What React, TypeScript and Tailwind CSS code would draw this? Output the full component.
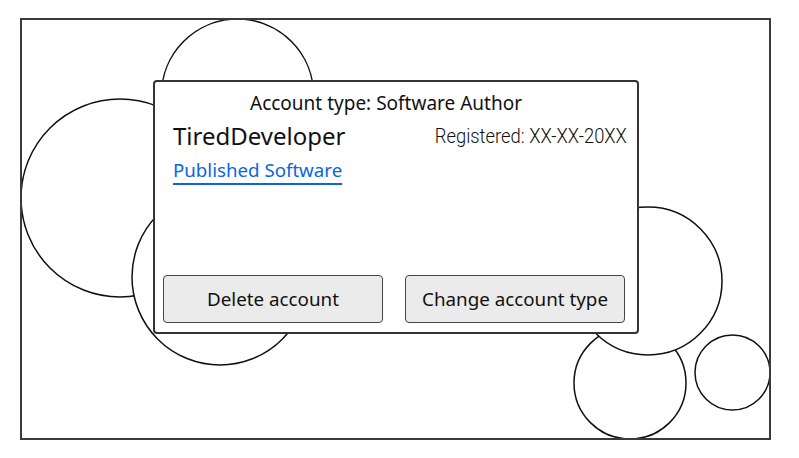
import React from 'react';

const circles = [
  { cx: 120, cy: 198, r: 99 },
  { cx: 237.5, cy: 95, r: 76 },
  { cx: 220, cy: 277, r: 88 },
  { cx: 630, cy: 383, r: 56 },
  { cx: 648, cy: 281, r: 74 },
  { cx: 732.5, cy: 372.5, r: 37.5 },
];

export default function App() {
  return (
    <div className="w-[799px] h-[458px] bg-white pt-[18px] pl-[20px]" style={{ fontFamily: '"Noto Sans", "Open Sans", sans-serif' }}>
      <div className="relative w-[751px] h-[422px] border-2 border-[#3a3a3a] overflow-hidden">
        {/* background doodle */}
        <svg className="absolute left-[-22px] top-[-20px]" width="799" height="458" viewBox="0 0 799 458">
          {circles.map((c, i) => (
            <circle key={i} cx={c.cx} cy={c.cy} r={c.r} fill="white" stroke="#111" strokeWidth="1.5" />
          ))}
        </svg>

        <div className="relative ml-[131px] mt-[60px] w-[486px] h-[254px] bg-white border-2 border-[#333] rounded-[4px] flex flex-col">
          <p className="text-[19px] leading-none text-[#111] text-center pr-[20px] pt-[12px]">
            Account type: Software Author
          </p>
          <div className="flex justify-between items-start pl-[18px] pr-[10px] mt-[11px]">
            <span className="text-[24px] leading-none text-[#111]">TiredDeveloper</span>
            <span
              className="inline-block pt-[2px] text-[20px] leading-none font-light text-[#111] scale-x-[0.92] origin-right"
              style={{ fontFamily: 'Roboto, sans-serif' }}
            >
              Registered: XX-XX-20XX
            </span>
          </div>
          <div className="pl-[18px] mt-[11px]">
            <a href="#" className="text-[18.7px] leading-none text-[#0a66e0] underline decoration-2 underline-offset-[6px]">
              Published Software
            </a>
          </div>
          <div className="flex-1" />
          <div className="flex gap-[22px] pl-[8px] pb-[9px]">
            <button className="w-[220px] h-[48px] bg-[#ebebeb] border border-[#444] rounded-[4px] text-[18.8px] text-[#111]">
              Delete account
            </button>
            <button className="w-[220px] h-[48px] bg-[#ebebeb] border border-[#444] rounded-[4px] text-[18.8px] text-[#111]">
              Change account type
            </button>
          </div>
        </div>
      </div>
    </div>
  );
}
